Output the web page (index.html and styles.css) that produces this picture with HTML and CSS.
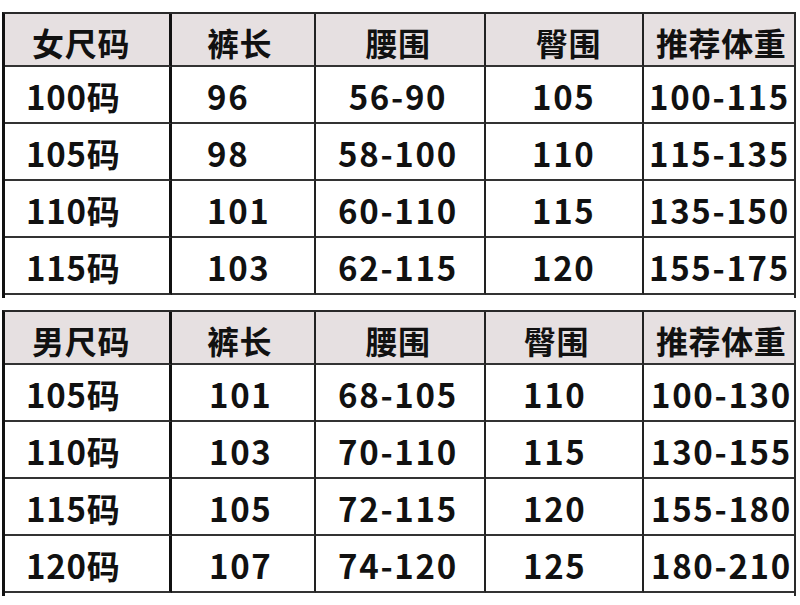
FILE: index.html
```html
<!DOCTYPE html>
<html lang="zh">
<head>
<meta charset="utf-8">
<title>尺码表</title>
<link rel="stylesheet" href="styles.css">
</head>
<body>
<div class="page">
  <div class="chart women">
    <div class="cell head c1">女尺码</div>
    <div class="cell head c2">裤长</div>
    <div class="cell head c3">腰围</div>
    <div class="cell head c4">臀围</div>
    <div class="cell head c5">推荐体重</div>

    <div class="cell c1">100码</div>
    <div class="cell c2">96</div>
    <div class="cell c3">56-90</div>
    <div class="cell c4">105</div>
    <div class="cell c5">100-115</div>

    <div class="cell c1">105码</div>
    <div class="cell c2">98</div>
    <div class="cell c3">58-100</div>
    <div class="cell c4">110</div>
    <div class="cell c5">115-135</div>

    <div class="cell c1">110码</div>
    <div class="cell c2">101</div>
    <div class="cell c3">60-110</div>
    <div class="cell c4">115</div>
    <div class="cell c5">135-150</div>

    <div class="cell c1">115码</div>
    <div class="cell c2">103</div>
    <div class="cell c3">62-115</div>
    <div class="cell c4">120</div>
    <div class="cell c5">155-175</div>
  </div>

  <div class="chart men">
    <div class="cell head c1">男尺码</div>
    <div class="cell head c2">裤长</div>
    <div class="cell head c3">腰围</div>
    <div class="cell head c4">臀围</div>
    <div class="cell head c5">推荐体重</div>

    <div class="cell c1">105码</div>
    <div class="cell c2">101</div>
    <div class="cell c3">68-105</div>
    <div class="cell c4">110</div>
    <div class="cell c5">100-130</div>

    <div class="cell c1">110码</div>
    <div class="cell c2">103</div>
    <div class="cell c3">70-110</div>
    <div class="cell c4">115</div>
    <div class="cell c5">130-155</div>

    <div class="cell c1">115码</div>
    <div class="cell c2">105</div>
    <div class="cell c3">72-115</div>
    <div class="cell c4">120</div>
    <div class="cell c5">155-180</div>

    <div class="cell c1">120码</div>
    <div class="cell c2">107</div>
    <div class="cell c3">74-120</div>
    <div class="cell c4">125</div>
    <div class="cell c5">180-210</div>
  </div>
</div>
</body>
</html>
```

FILE: styles.css
```css
html, body {
  margin: 0;
  padding: 0;
  background: #ffffff;
}

.page {
  width: 800px;
  height: 605px;
  padding: 12px 0 0 2px;
  box-sizing: border-box;
  display: flex;
  flex-direction: column;
  gap: 12px;
  font-family: "Noto Sans CJK SC", "Noto Sans", sans-serif;
  font-weight: 700;
  font-size: 33px;
  color: #111111;
}

.chart {
  width: 794px;
  box-sizing: border-box;
  display: grid;
  grid-template-columns: 167px 144px 170px 158px 150px;
  grid-template-rows: 53px 57px 57px 57px 57px;
  border-top: 2px solid #2a2a2a;
  border-left: 3px solid #111111;
  border-right: 2px solid #2a2a2a;
  padding-bottom: 3px;
}

.cell {
  box-sizing: border-box;
  display: flex;
  align-items: center;
  padding-top: 3px;
  border-bottom: 2px solid #333333;
  border-right: 2px solid #222222;
  white-space: nowrap;
  line-height: 1;
  letter-spacing: 1.7px;
}

.head {
  background: #e6e0e1;
  padding-top: 4px;
  font-size: 32px;
  letter-spacing: 0.6px;
}

.c1 {
  border-right: 3px solid #111111;
  padding-left: 21px;
  letter-spacing: 0.8px;
}
.head.c1 {
  padding-left: 27px;
}

.c2 {
  padding-left: 35px;
}

.c3 {
  justify-content: center;
  padding-right: 4px;
}

.c4 {
  padding-left: 46px;
}
.head.c4 {
  padding-left: 50px;
}

.c5 {
  border-right: none;
  padding-left: 5px;
}
.head.c5 {
  padding-left: 12px;
}

.men .c2 {
  padding-left: 37px;
}
.men .head.c2 {
  padding-left: 35px;
}
.men .c4 {
  padding-left: 37px;
}
.men .head.c4 {
  padding-left: 38px;
}
.men .c5 {
  padding-left: 7px;
}
.men .head.c5 {
  padding-left: 12px;
}
```
